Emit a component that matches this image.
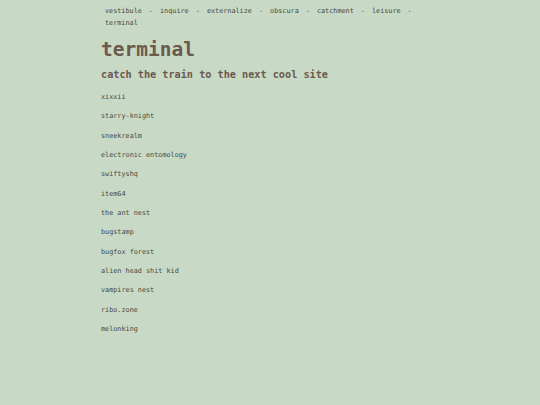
import React from 'react';

const pages = ['vestibule', 'inquire', 'externalize', 'obscura', 'catchment', 'leisure', 'terminal'];

const sites = [
  'xixxii',
  'starry-knight',
  'sneekrealm',
  'electronic entomology',
  'swiftyshq',
  'item64',
  'the ant nest',
  'bugstamp',
  'bugfox forest',
  'alien head shit kid',
  'vampires nest',
  'ribo.zone',
  'melonking',
];

const mono = { fontFamily: '"DejaVu Sans Mono", "Liberation Mono", monospace' };

export default function App() {
  return (
    <div className="min-h-[405px] w-full bg-[#c8d9c6]" style={mono}>
      <div className="w-[338px] mx-auto">
        <nav className="pl-[4px] pt-[5px] text-[6.8px] leading-[12px] text-[#434b44]">
          {pages.map((p, i) => (
            <span key={p}>
              <a href="#" className="hover:underline">{p}</a>
              {i < pages.length - 1 && <span className="ml-[7px] mr-[3px]">-</span>}{' '}
            </span>
          ))}
        </nav>
        <h1 className="mt-[9px] text-[19.5px] leading-[24px] font-bold text-[#6b5a4d]">terminal</h1>
        <h2 className="mt-[6px] text-[10.2px] leading-[14px] font-bold text-[#6b5a4d]">
          catch the train to the next cool site
        </h2>
        <ul className="mt-[6px] text-[6.8px] leading-[19.33px] text-[#434b44]">
          {sites.map((s) => (
            <li key={s}>
              <a href="#" className="hover:underline">{s}</a>
            </li>
          ))}
        </ul>
      </div>
    </div>
  );
}
